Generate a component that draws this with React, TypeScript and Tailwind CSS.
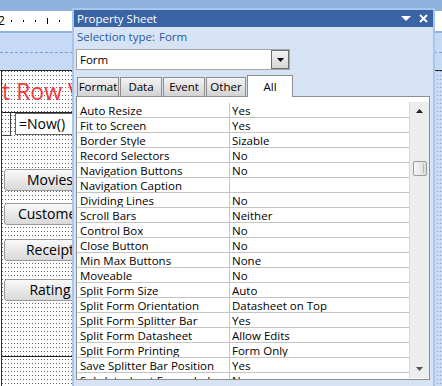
import React from "react";

const rows: [string, string][] = [
  ["Auto Resize", "Yes"],
  ["Fit to Screen", "Yes"],
  ["Border Style", "Sizable"],
  ["Record Selectors", "No"],
  ["Navigation Buttons", "No"],
  ["Navigation Caption", ""],
  ["Dividing Lines", "No"],
  ["Scroll Bars", "Neither"],
  ["Control Box", "No"],
  ["Close Button", "No"],
  ["Min Max Buttons", "None"],
  ["Moveable", "No"],
  ["Split Form Size", "Auto"],
  ["Split Form Orientation", "Datasheet on Top"],
  ["Split Form Splitter Bar", "Yes"],
  ["Split Form Datasheet", "Allow Edits"],
  ["Split Form Printing", "Form Only"],
  ["Save Splitter Bar Position", "Yes"],
  ["Subdatasheet Expanded", "No"],
  ["Subdatasheet Height", "0\""],
];

function FormButton({ label, className }: { label: string; className?: string }) {
  return (
    <div
      className={
        "w-[92px] h-[22px] flex items-center justify-center rounded-[3px] border border-[#9a9a9a] bg-gradient-to-b from-[#fafafa] to-[#d9d9d9] text-[14px] text-black leading-none " +
        (className ?? "")
      }
    >
      {label}
    </div>
  );
}

export default function App() {
  return (
    <div className="relative w-[442px] h-[386px] overflow-hidden bg-[#8fb1df] font-['Open_Sans','Noto_Sans',sans-serif]">
      {/* Background: form design surface */}
      <div className="flex flex-col h-full">
        <div className="h-[11px] bg-[#8fb1df]" />
        <div className="h-[20px] bg-white flex items-center text-[12px] leading-none text-black">
          <span className="ml-[-2px] w-[6px]">2</span>
          <div className="flex items-center gap-[11px] ml-[7px]">
            <span className="w-[1px] h-[2px] bg-black" />
            <span className="w-[1px] h-[2px] bg-black" />
            <span className="w-[1px] h-[2px] bg-black" />
            <span className="w-[1px] h-[6px] bg-black" />
            <span className="w-[1px] h-[2px] bg-black" />
          </div>
        </div>
        <div className="h-[2px] bg-[#8fb1df]" />
        <div className="h-[37px] bg-[#c6daf5] pt-[19px]">
          <div className="border-t border-dashed border-[#7d9dcb]" />
        </div>
        <div className="h-[1px] bg-[#2a2a2a]" />
        <div className="flex-1 flex">
          <div className="w-[432px] bg-[linear-gradient(to_right,#fff_2px,transparent_2px),linear-gradient(to_bottom,#666_1px,#fff_1px)] bg-[length:3px_4px]">
            <div className="ml-[1px] border-l border-[#333] h-full flex flex-col">
              <div className="h-[42px] border-b border-[#222] overflow-hidden">
                <div className="ml-[0px] mt-[6px] text-[23px] leading-[28px] text-[#f23a3a] whitespace-nowrap">
                  t Row View
                </div>
              </div>
              <div className="flex items-start">
                <div className="w-[9px] h-[23px] border-r border-b border-[#444]" />
                <div className="ml-[4px] w-[80px] h-[22px] border border-[#666] bg-white pl-[3px] text-[14px] leading-[20px] text-black">
                  =Now()
                </div>
              </div>
              <FormButton label="Movies" className="mt-[33px] ml-[2px]" />
              <FormButton label="Customer" className="mt-[12px] ml-[2px]" />
              <FormButton label="Receipt" className="mt-[14px] ml-[2px]" />
              <FormButton label="Rating" className="mt-[18px] ml-[2px]" />
              <div className="mt-[55px] border-b border-[#222]" />
            </div>
          </div>
          <div className="flex-1 bg-[linear-gradient(to_right,#c9dcf4_2px,transparent_2px),linear-gradient(to_bottom,#7f9fcc_1px,#c9dcf4_1px)] bg-[length:3px_4px]" />
        </div>
      </div>

      {/* Property Sheet window (floating) */}
      <div className="absolute left-[72px] top-[8px] w-[363px] h-[380px] bg-[#a8c5ec] p-[2px] flex flex-col">
        <div className="h-[17px] bg-[#3b64a4] flex items-center pl-[3px] pr-[5px] text-white text-[11.5px] leading-none">
          <span className="flex-1">Property Sheet</span>
          <svg width="10" height="6" viewBox="0 0 10 6" className="mr-[8px]">
            <polygon points="0,0 10,0 5,5" fill="#fff" />
          </svg>
          <svg width="9" height="9" viewBox="0 0 9 9">
            <path d="M1 1 L8 8 M8 1 L1 8" stroke="#fff" strokeWidth="1.8" />
          </svg>
        </div>
        <div className="flex-1 bg-[#d5e3f4] flex flex-col px-[2px] overflow-hidden">
          <div className="h-[19px] flex items-center pl-[1px] text-[11.5px] leading-none text-[#2d5b9c]">
            <span className="w-[82px] shrink-0 whitespace-nowrap">Selection type:</span>
            <span>Form</span>
          </div>
          <div className="mt-[3px] w-[214px] h-[21px] border border-[#a5a5a5] bg-white flex items-center">
            <span className="flex-1 pl-[3px] text-[11.5px] text-black leading-none">Form</span>
            <div className="w-[18px] h-[19px] border border-[#6e6e6e] bg-gradient-to-b from-[#f3f3f3] to-[#d6d6d6] flex items-center justify-center">
              <svg width="7" height="4" viewBox="0 0 7 4">
                <polygon points="0,0 7,0 3.5,4" fill="#000" />
              </svg>
            </div>
          </div>
          <div className="mt-[4px] h-[22px] flex items-end pl-[1px] text-[11.5px] leading-none text-black">
            {[
              ["Format", "w-[42px]"],
              ["Data", "w-[42px]"],
              ["Event", "w-[42px]"],
              ["Other", "w-[40px]"],
            ].map(([t, w]) => (
              <div
                key={t}
                className={`${w} mr-[1px] h-[19px] border border-b-0 border-[#8d8d8d] bg-gradient-to-b from-[#f2f2f2] to-[#d3d3d3] flex items-center justify-center`}
              >
                {t}
              </div>
            ))}
            <div className="w-[46px] h-[22px] mb-[-1px] relative z-10 border border-b-0 border-[#8d8d8d] bg-white flex items-center justify-center">
              All
            </div>
          </div>
          <div className="w-[354px] h-[284px] border border-[#8d8d8d] bg-white pt-[5px] flex">
            <div className="flex-1 mt-[1px] overflow-hidden text-[11.5px] leading-none text-black">
              {rows.map(([k, v]) => (
                <div key={k} className="h-[15px] flex border-b border-[#c4c4c4]">
                  <div className="w-[153px] border-r border-[#c4c4c4] pl-[3px] pt-[1px] flex items-center whitespace-nowrap overflow-hidden">
                    {k}
                  </div>
                  <div className="flex-1 pl-[2px] pt-[1px] flex items-center whitespace-nowrap overflow-hidden">{v}</div>
                </div>
              ))}
            </div>
            <div className="w-[20px] mb-[1px] bg-[#ededed] border-l border-[#d8d8d8] flex flex-col items-center">
              <svg width="7" height="4" viewBox="0 0 7 4" className="mt-[7px]">
                <polygon points="0,4 7,4 3.5,0" fill="#222" />
              </svg>
              <div className="mt-[48px] w-[14px] h-[15px] rounded-[2px] border border-[#9a9a9a] bg-gradient-to-r from-[#f7f7f7] to-[#dcdcdc] flex items-center justify-end pr-[2px] gap-[1px]">
                <span className="w-[1px] h-[9px] bg-[#b8b8b8]" />
              </div>
              <div className="flex-1" />
              <svg width="7" height="4" viewBox="0 0 7 4" className="mb-[7px]">
                <polygon points="0,0 7,0 3.5,4" fill="#555" />
              </svg>
            </div>
          </div>
        </div>
      </div>
    </div>
  );
}
